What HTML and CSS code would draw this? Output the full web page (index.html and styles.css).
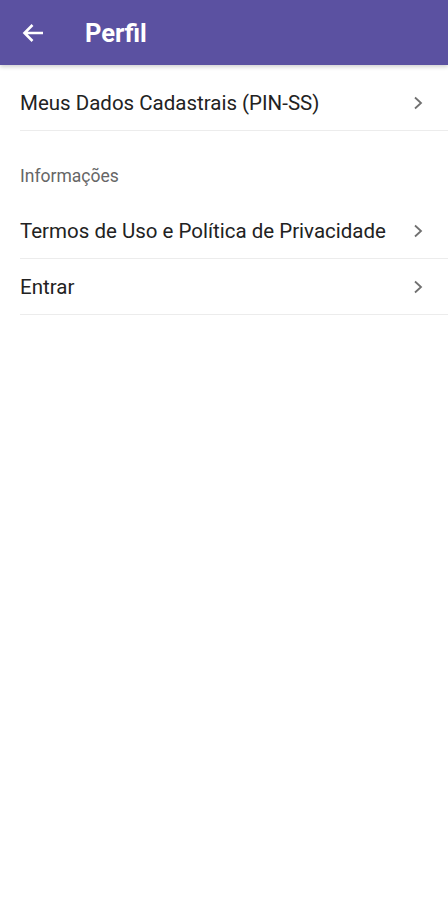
FILE: index.html
```html
<!DOCTYPE html>
<html lang="pt">
<head>
  <meta charset="UTF-8" />
  <meta name="viewport" content="width=device-width, initial-scale=1" />
  <title>Perfil</title>
  <link rel="stylesheet" href="styles.css">
</head>
<body>
  <header class="topbar">
    <button class="back" aria-label="Voltar">
      <svg width="22" height="20" viewBox="0 0 22 20"><path d="M21 10H2.5M10.5 2L2.5 10l8 8" fill="none" stroke="#fff" stroke-width="2.6" stroke-linejoin="miter"/></svg>
    </button>
    <h1>Perfil</h1>
  </header>

  <ul class="menu first">
    <li class="item">Meus Dados Cadastrais (PIN-SS)
      <svg class="chev" width="10" height="14" viewBox="0 0 10 14"><path d="M2 1.5l6 5.5-6 5.5" fill="none" stroke="#707070" stroke-width="1.8"/></svg>
    </li>
  </ul>

  <p class="section">Informações</p>
  <ul class="menu">
    <li class="item">Termos de Uso e Política de Privacidade
      <svg class="chev" width="10" height="14" viewBox="0 0 10 14"><path d="M2 1.5l6 5.5-6 5.5" fill="none" stroke="#707070" stroke-width="1.8"/></svg>
    </li>
    <li class="item">Entrar
      <svg class="chev" width="10" height="14" viewBox="0 0 10 14"><path d="M2 1.5l6 5.5-6 5.5" fill="none" stroke="#707070" stroke-width="1.8"/></svg>
    </li>
  </ul>
</body>
</html>
```

FILE: styles.css
```css
* {
  box-sizing: border-box;
}

body {
  margin: 0;
  font-family: Roboto, "Noto Sans", sans-serif;
  background: #fff;
  color: #222;
}

.topbar {
  height: 65px;
  background: #5b51a1;
  display: flex;
  align-items: center;
  padding-left: 22px;
  box-shadow: 0 2px 4px rgba(0, 0, 0, 0.18);
}

.back {
  background: none;
  border: none;
  padding: 0;
  display: flex;
  width: 63px;
}

.topbar h1 {
  margin: 0;
  color: #fff;
  font-size: 25.5px;
  font-weight: 700;
}

.menu {
  list-style: none;
  margin: 0;
  padding: 0 0 0 20px;
}

.menu.first {
  margin-top: 10px;
}

.item {
  height: 56px;
  display: flex;
  align-items: center;
  justify-content: space-between;
  padding-right: 25px;
  font-size: 20.5px;
  border-bottom: 1px solid #ececec;
}

.chev {
  display: block;
}

.section {
  margin: 0;
  height: 72px;
  padding-top: 34px;
  padding-left: 20px;
  font-size: 17.5px;
  line-height: 22px;
  color: #666;
}
```
